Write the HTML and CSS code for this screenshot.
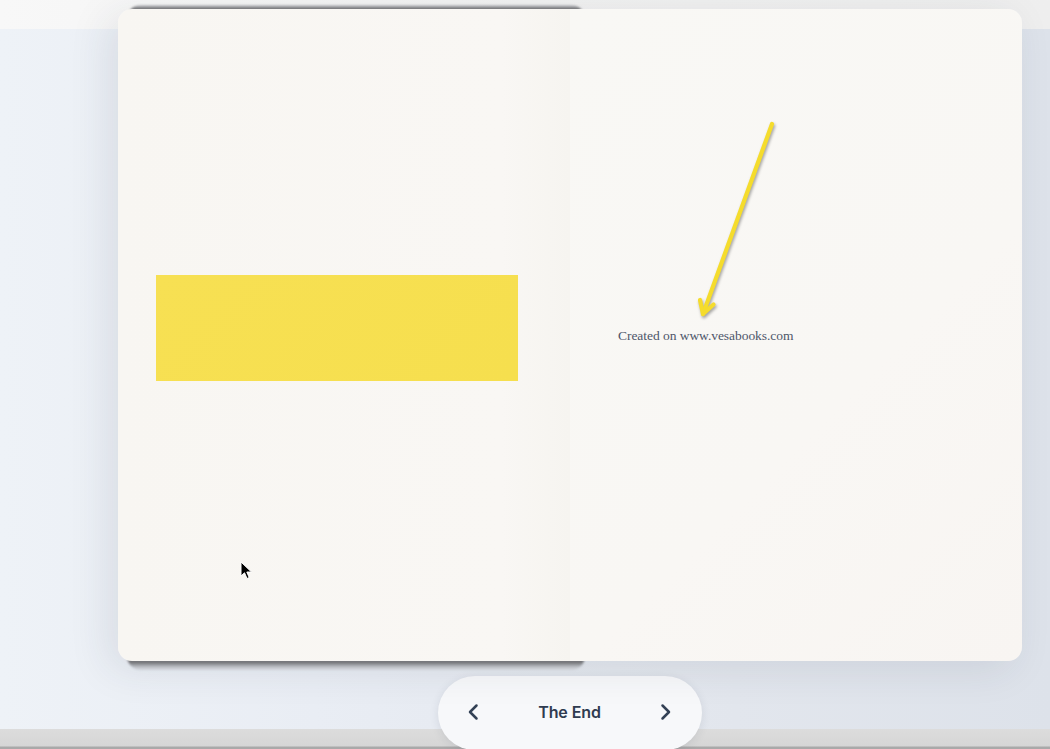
FILE: index.html
```html
<!DOCTYPE html>
<html lang="en">
<head>
<meta charset="utf-8">
<title>The End</title>
<link rel="stylesheet" href="styles.css">
</head>
<body>
<div class="topbar"></div>
<main class="stage">
  <div class="column">
    <div class="book">
      <section class="page page-left">
        <div class="yellow-block"></div>
      </section>
      <section class="page page-right">
        <svg class="arrow" width="260" height="340" viewBox="0 0 260 340" aria-hidden="true">
          <g fill="none" stroke="#f5dc2c" stroke-width="4.2" stroke-linecap="round" stroke-linejoin="round">
            <path d="M202 115 L133 305"/>
            <path d="M130 291 L133 305 L143.5 295.5"/>
          </g>
        </svg>
        <p class="credit">Created on www.vesabooks.com</p>
      </section>
    </div>
    <nav class="pager">
      <button class="nav-btn" aria-label="Previous">
        <svg width="20" height="20" viewBox="0 0 20 20"><path d="M12.5 3.5 L6 10 L12.5 16.5" fill="none" stroke="#334155" stroke-width="2.5" stroke-linecap="round" stroke-linejoin="round"/></svg>
      </button>
      <span class="pager-label">The End</span>
      <button class="nav-btn" aria-label="Next">
        <svg width="20" height="20" viewBox="0 0 20 20"><path d="M7.5 3.5 L14 10 L7.5 16.5" fill="none" stroke="#334155" stroke-width="2.5" stroke-linecap="round" stroke-linejoin="round"/></svg>
      </button>
    </nav>
  </div>
</main>
<div class="bottombar"></div>
<svg class="cursor" width="14" height="20" viewBox="0 0 14 20" aria-hidden="true">
  <path d="M1 1 L1 15 L4.5 11.8 L7 17.5 L9.2 16.5 L6.8 11 L11.5 11 Z" fill="#000" stroke="#fff" stroke-width="1"/>
</svg>
</body>
</html>
```

FILE: styles.css
```css
* { box-sizing: border-box; }

html, body {
  margin: 0;
  padding: 0;
  width: 1050px;
  height: 749px;
  overflow: hidden;
}

body {
  position: relative;
  font-family: "Inter", "Liberation Sans", sans-serif;
  background: linear-gradient(90deg, #eef2f7 0%, #e9edf4 30%, #e2e6ed 70%, #dde2ea 100%);
  display: flex;
  flex-direction: column;
}

.topbar {
  height: 29px;
  flex: none;
  background: linear-gradient(90deg, #f8f8f8 0%, #f1f1f1 50%, #eeeeee 100%);
}

.stage {
  flex: 1 1 0;
  min-height: 0;
  display: flex;
  padding-left: 118px;
  margin-top: -20px;
  position: relative;
  z-index: 2;
}

.column {
  width: 904px;
  display: flex;
  flex-direction: column;
  align-items: center;
}

.book {
  width: 904px;
  height: 652px;
  flex: none;
  display: flex;
  border-radius: 14px;
  position: relative;
  isolation: isolate;
  box-shadow: -10px 8px 40px rgba(40, 50, 70, 0.10);
}

.book::before {
  content: "";
  position: absolute;
  left: 9px;
  width: 458px;
  top: -4px;
  bottom: -9px;
  border-radius: 14px;
  background: linear-gradient(180deg,
    #d4d6da 0px, #9a9b9e 2px, #6a6b6e 4px, #c9ccd2 12px,
    #c9ccd2 calc(100% - 12px), #646568 calc(100% - 9px),
    #8e9095 calc(100% - 6px), #bfc2c8 calc(100% - 3px), #d3d6dc 100%);
  filter: blur(1px);
  z-index: -1;
}

.page {
  height: 100%;
  position: relative;
}

.page-left {
  width: 452px;
  background: linear-gradient(90deg, #f8f6f2 0%, #f9f7f4 85%, #f6f4f0 100%);
  border-radius: 14px 0 0 14px;
  padding: 266px 0 0 38px;
}

.page-right {
  width: 452px;
  background: linear-gradient(135deg, #f9f8f5 0%, #f9f7f4 60%, #f8f5f2 100%);
  border-radius: 0 14px 14px 0;
  padding: 317px 0 0 48px;
}

.yellow-block {
  width: 362px;
  height: 106px;
  background: linear-gradient(135deg, #f7e053 0%, #f6df4e 100%);
}

.arrow {
  position: absolute;
  left: 0;
  top: 0;
  filter: drop-shadow(1px 2px 1.5px rgba(0, 0, 0, 0.35));
}

.credit {
  margin: 0;
  font-family: "Liberation Serif", "DejaVu Serif", serif;
  font-size: 13.5px;
  line-height: 20px;
  color: #4e566a;
  letter-spacing: -0.05px;
}

.pager {
  margin-top: 15px;
  flex: none;
  width: 264px;
  height: 74px;
  border-radius: 37px;
  background: #f7f8fa;
  box-shadow: 0 2px 10px rgba(40, 50, 70, 0.10);
  display: flex;
  align-items: center;
  justify-content: space-between;
  padding: 0 27px 2px 26px;
}

.nav-btn {
  width: 20px;
  height: 20px;
  padding: 0;
  border: 0;
  background: none;
  display: flex;
  align-items: center;
  justify-content: center;
}

.pager-label {
  font-weight: 600;
  font-size: 16px;
  color: #2f3b50;
  letter-spacing: -0.1px;
}

.bottombar {
  height: 20px;
  flex: none;
  position: relative;
  z-index: 1;
  background: linear-gradient(180deg, #dcdcdc 0%, #d6d6d6 85%, #a9a9a9 90%, #a9a9a9 100%);
}

.cursor {
  position: absolute;
  left: 240px;
  top: 561px;
  z-index: 5;
}
```
